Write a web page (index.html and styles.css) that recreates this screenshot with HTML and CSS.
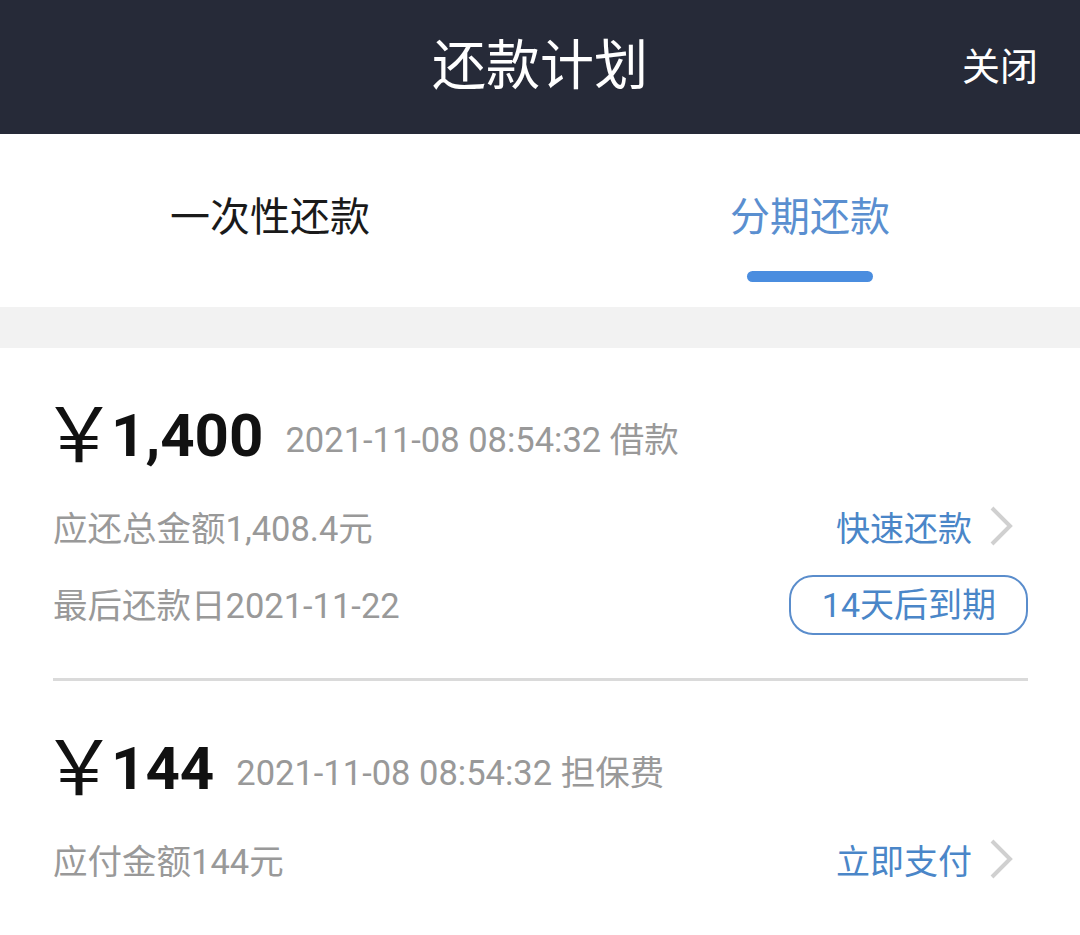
FILE: index.html
```html
<!DOCTYPE html>
<html lang="zh-CN">
<head>
    <meta charset="UTF-8">
    <meta name="viewport" content="width=device-width, initial-scale=1.0">
    <title>还款计划</title>
    <link rel="stylesheet" href="styles.css">
</head>
<body>

<!-- Top bar -->
<div class="header">
    <span class="header-title">还款计划</span>
    <span class="header-close">关闭</span>
</div>

<!-- Tabs -->
<div class="tabs">
    <div class="tab">
        <span class="tab-label">一次性还款</span>
    </div>
    <div class="tab active">
        <span class="tab-label">分期还款</span>
        <span class="tab-line"></span>
    </div>
</div>

<div class="band"></div>

<!-- Plan list -->
<div class="plan">
    <div class="item">
        <div class="row row-amount">
            <span class="yen">￥</span><span class="amount">1,400</span>
            <span class="stamp">2021-11-08 08:54:32 借款</span>
        </div>
        <div class="row row-info first">
            <span class="info">应还总金额1,408.4元</span>
            <span class="action">快速还款
                <svg class="chevron" width="26" height="42" viewBox="0 0 26 42"><polyline points="4,3 22,21 4,39" fill="none" stroke="#d0d0d0" stroke-width="4"/></svg>
            </span>
        </div>
        <div class="row row-info">
            <span class="info">最后还款日2021-11-22</span>
            <span class="badge">14天后到期</span>
        </div>
    </div>

    <div class="divider"></div>

    <div class="item">
        <div class="row row-amount">
            <span class="yen">￥</span><span class="amount">144</span>
            <span class="stamp">2021-11-08 08:54:32 担保费</span>
        </div>
        <div class="row row-info first">
            <span class="info">应付金额144元</span>
            <span class="action">立即支付
                <svg class="chevron" width="26" height="42" viewBox="0 0 26 42"><polyline points="4,3 22,21 4,39" fill="none" stroke="#d0d0d0" stroke-width="4"/></svg>
            </span>
        </div>
    </div>
</div>

</body>
</html>
```

FILE: styles.css
```css
* {
    box-sizing: border-box;
    margin: 0;
    padding: 0;
}

body {
    font-family: Roboto, "Noto Sans CJK SC", sans-serif;
    background-color: #fff;
    color: #333;
    width: 1080px;
    height: 935px;
    overflow: hidden;
}

.header {
    height: 134px;
    background-color: #262a38;
    color: #fff;
    display: flex;
    align-items: center;
    justify-content: center;
    position: relative;
}

.header-title {
    font-size: 54px;
    line-height: 60px;
}

.header-close {
    position: absolute;
    right: 42px;
    top: 44px;
    font-size: 38px;
    line-height: 46px;
}

.tabs {
    height: 173px;
    display: flex;
}

.tab {
    flex: 1;
    display: flex;
    flex-direction: column;
    align-items: center;
    padding-top: 56px;
}

.tab-label {
    font-size: 40px;
    line-height: 56px;
    color: #1a1a1a;
}

.tab.active .tab-label {
    color: #5a8fd0;
}

.tab-line {
    width: 126px;
    height: 11px;
    margin-top: 25px;
    border-radius: 6px;
    background-color: #4a8ddf;
}

.band {
    height: 41px;
    background-color: #f2f2f2;
}

.plan {
    padding: 48px 52px 0 53px;
}

.row {
    display: flex;
    align-items: center;
}

.row-amount {
    height: 80px;
}

.yen {
    font-size: 76px;
    line-height: 80px;
    color: #111;
    margin-left: -12px;
    margin-right: -6px;
}

.amount {
    font-size: 60px;
    font-weight: bold;
    line-height: 80px;
    color: #111;
}

.stamp {
    font-size: 34.5px;
    color: #999;
    margin-left: 22px;
    margin-top: 2px;
}

.row-info {
    height: 60px;
    justify-content: space-between;
    margin-top: 17px;
}

.row-info.first {
    margin-top: 20px;
}

.info {
    font-size: 34.5px;
    color: #999;
}

.action {
    display: flex;
    align-items: center;
    font-size: 34px;
    color: #4a86c8;
    margin-right: 14px;
}

.chevron {
    margin-left: 16px;
}

.badge {
    height: 60px;
    padding: 0 30px 0 31px;
    border: 2px solid #5a8dcc;
    border-radius: 24px;
    font-size: 34px;
    line-height: 56px;
    color: #4a86c8;
    margin-top: 4px;
}

.divider {
    height: 3px;
    background-color: #dadada;
    margin-top: 45px;
    margin-bottom: 48px;
}
```
